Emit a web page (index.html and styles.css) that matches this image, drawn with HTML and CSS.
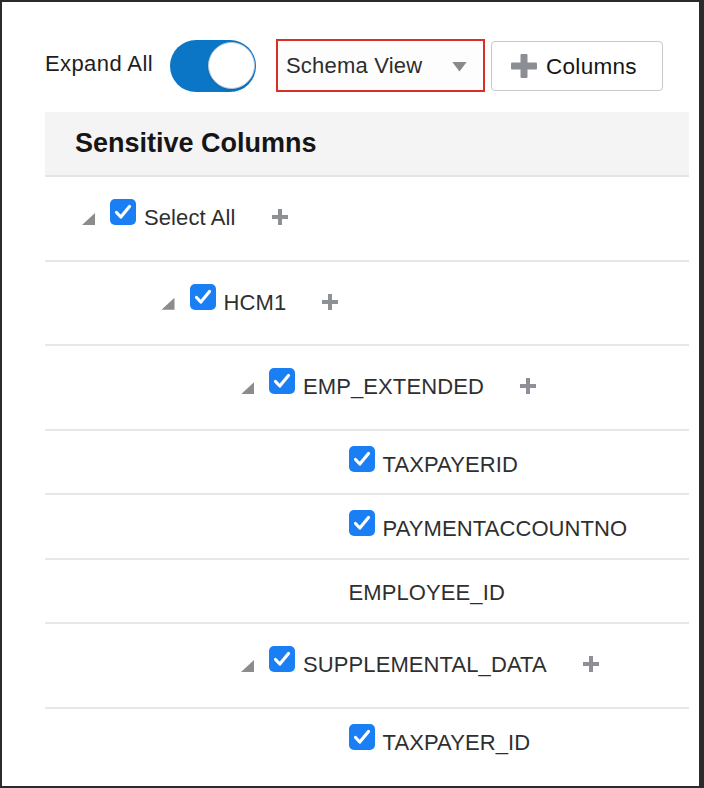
FILE: index.html
```html
<!DOCTYPE html>
<html lang="en">
<head>
<meta charset="utf-8">
<title>Sensitive Columns</title>
<link rel="stylesheet" href="styles.css">
</head>
<body>
<div class="frame">
  <div class="toolbar">
    <span class="expand-label">Expand All</span>
    <div class="switch" role="switch" aria-checked="true"><div class="knob"></div></div>
    <div class="select">
      <span class="select-value">Schema View</span>
      <span class="caret"></span>
    </div>
    <button class="btn" type="button">
      <svg class="btn-plus" viewBox="0 0 26 24" width="26" height="24" aria-hidden="true">
        <rect x="9.5" y="0" width="7" height="24" rx="1" fill="#8b8e92"/>
        <rect x="0" y="8.5" width="26" height="7" rx="1" fill="#8b8e92"/>
      </svg>
      <span>Columns</span>
    </button>
  </div>

  <div class="tree">
    <div class="thead">Sensitive Columns</div>

    <div class="row parent lvl0">
      <span class="twisty"></span>
      <span class="check"><svg viewBox="0 0 26 26" width="26" height="26"><polyline points="6.5,13.5 10.8,18 19.5,7.5" fill="none" stroke="#fff" stroke-width="3.2" stroke-linecap="round" stroke-linejoin="round"/></svg></span>
      <span class="label">Select All</span>
      <svg class="add" viewBox="0 0 16 16" width="16" height="16"><rect x="6" y="0" width="4" height="16" fill="#8d9094"/><rect x="0" y="6" width="16" height="4" fill="#8d9094"/></svg>
    </div>

    <div class="row parent lvl1">
      <span class="twisty"></span>
      <span class="check"><svg viewBox="0 0 26 26" width="26" height="26"><polyline points="6.5,13.5 10.8,18 19.5,7.5" fill="none" stroke="#fff" stroke-width="3.2" stroke-linecap="round" stroke-linejoin="round"/></svg></span>
      <span class="label">HCM1</span>
      <svg class="add" viewBox="0 0 16 16" width="16" height="16"><rect x="6" y="0" width="4" height="16" fill="#8d9094"/><rect x="0" y="6" width="16" height="4" fill="#8d9094"/></svg>
    </div>

    <div class="row parent lvl2">
      <span class="twisty"></span>
      <span class="check"><svg viewBox="0 0 26 26" width="26" height="26"><polyline points="6.5,13.5 10.8,18 19.5,7.5" fill="none" stroke="#fff" stroke-width="3.2" stroke-linecap="round" stroke-linejoin="round"/></svg></span>
      <span class="label">EMP_EXTENDED</span>
      <svg class="add" viewBox="0 0 16 16" width="16" height="16"><rect x="6" y="0" width="4" height="16" fill="#8d9094"/><rect x="0" y="6" width="16" height="4" fill="#8d9094"/></svg>
    </div>

    <div class="row leaf lvl3">
      <span class="twisty none"></span>
      <span class="check"><svg viewBox="0 0 26 26" width="26" height="26"><polyline points="6.5,13.5 10.8,18 19.5,7.5" fill="none" stroke="#fff" stroke-width="3.2" stroke-linecap="round" stroke-linejoin="round"/></svg></span>
      <span class="label">TAXPAYERID</span>
    </div>

    <div class="row leaf lvl3">
      <span class="twisty none"></span>
      <span class="check"><svg viewBox="0 0 26 26" width="26" height="26"><polyline points="6.5,13.5 10.8,18 19.5,7.5" fill="none" stroke="#fff" stroke-width="3.2" stroke-linecap="round" stroke-linejoin="round"/></svg></span>
      <span class="label">PAYMENTACCOUNTNO</span>
    </div>

    <div class="row leaf nocheck lvl3">
      <span class="twisty none"></span>
      <span class="label plain">EMPLOYEE_ID</span>
    </div>

    <div class="row parent lvl2">
      <span class="twisty"></span>
      <span class="check"><svg viewBox="0 0 26 26" width="26" height="26"><polyline points="6.5,13.5 10.8,18 19.5,7.5" fill="none" stroke="#fff" stroke-width="3.2" stroke-linecap="round" stroke-linejoin="round"/></svg></span>
      <span class="label">SUPPLEMENTAL_DATA</span>
      <svg class="add" viewBox="0 0 16 16" width="16" height="16"><rect x="6" y="0" width="4" height="16" fill="#8d9094"/><rect x="0" y="6" width="16" height="4" fill="#8d9094"/></svg>
    </div>

    <div class="row leaf lvl3">
      <span class="twisty none"></span>
      <span class="check"><svg viewBox="0 0 26 26" width="26" height="26"><polyline points="6.5,13.5 10.8,18 19.5,7.5" fill="none" stroke="#fff" stroke-width="3.2" stroke-linecap="round" stroke-linejoin="round"/></svg></span>
      <span class="label">TAXPAYER_ID</span>
    </div>
  </div>
</div>
</body>
</html>
```

FILE: styles.css
```css
* { box-sizing: border-box; }

html, body {
  margin: 0;
  padding: 0;
  background: #ffffff;
}

body {
  font-family: "Liberation Sans", Arial, Helvetica, sans-serif;
  color: #2e2e2e;
}

.frame {
  width: 704px;
  height: 788px;
  border: 2px solid #2b2b2b;
  border-right-width: 5px;
  overflow: hidden;
  background: #ffffff;
}

/* ---------- toolbar ---------- */
.toolbar {
  display: flex;
  align-items: center;
  margin: 37px 0 0 43px;
  height: 53px;
}

.expand-label {
  font-size: 22px;
  letter-spacing: 0.4px;
  color: #1e1e1e;
  margin-bottom: 4px;
}

.switch {
  width: 86px;
  height: 52px;
  border-radius: 26px;
  background: #0b76c6;
  margin-left: 17px;
  display: flex;
  align-items: center;
  justify-content: flex-end;
  padding-right: 1px;
}

.knob {
  width: 47px;
  height: 47px;
  border-radius: 50%;
  background: #ffffff;
  border: 1px solid #b9c9da;
  box-shadow: 0 1px 2px rgba(0, 0, 0, 0.15);
}

.select {
  width: 209px;
  height: 53px;
  margin-left: 20px;
  border: 2px solid #d92f27;
  background: #fdfdfd;
  display: flex;
  align-items: center;
  justify-content: space-between;
  padding: 0 16px 0 8px;
}

.select-value {
  font-size: 22px;
  color: #2d2d2d;
  letter-spacing: 0.2px;
}

.caret {
  width: 15px;
  height: 10px;
  background: #8a8a8a;
  clip-path: polygon(0 0, 100% 0, 50% 100%);
  margin-top: 2px;
}

.btn {
  width: 172px;
  height: 50px;
  margin-left: 6px;
  border: 1px solid #c9c9c9;
  border-radius: 4px;
  background: #ffffff;
  display: flex;
  align-items: center;
  padding: 0 0 0 19px;
  font-family: inherit;
  font-size: 22.5px;
  color: #151515;
  cursor: pointer;
}

.btn span {
  margin-left: 9px;
  padding-top: 2px;
  letter-spacing: 0.3px;
}

.btn-plus { display: block; }

/* ---------- tree table ---------- */
.tree {
  margin: 20px 0 0 43px;
  width: 644px;
}

.thead {
  height: 65px;
  background: #f4f4f4;
  border-bottom: 2px solid #e4e4e4;
  display: flex;
  align-items: center;
  padding-left: 30px;
  font-size: 27px;
  font-weight: bold;
  color: #161616;
}

.row {
  display: flex;
  align-items: baseline;
  border-bottom: 2px solid #e7e7e7;
  font-size: 22px;
  color: #2f2f2f;
}

.row:last-child { border-bottom: none; }

.row.parent {
  height: 84.67px;
  padding-top: 22px;
}

.row.leaf {
  height: 64.33px;
  padding-top: 15px;
}

.row.nocheck { padding-top: 20px; }

.lvl0 { padding-left: 37px; }
.lvl1 { padding-left: 116.5px; }
.lvl2 { padding-left: 196px; }
.lvl3 { padding-left: 275.5px; }

.twisty {
  display: inline-block;
  width: 13px;
  height: 12px;
  margin-right: 15px;
  background: #8c8c8c;
  clip-path: polygon(100% 0, 100% 100%, 0 100%);
}

.twisty.none { visibility: hidden; }

.check {
  display: inline-block;
  width: 26px;
  height: 26px;
  border-radius: 5px;
  background: #1a7ef5;
}

.check svg { display: block; }

.label {
  margin-left: 8px;
  letter-spacing: 0.1px;
}

.label.plain { margin-left: 0; }

.add {
  margin-left: 36px;
  display: inline-block;
}
```
